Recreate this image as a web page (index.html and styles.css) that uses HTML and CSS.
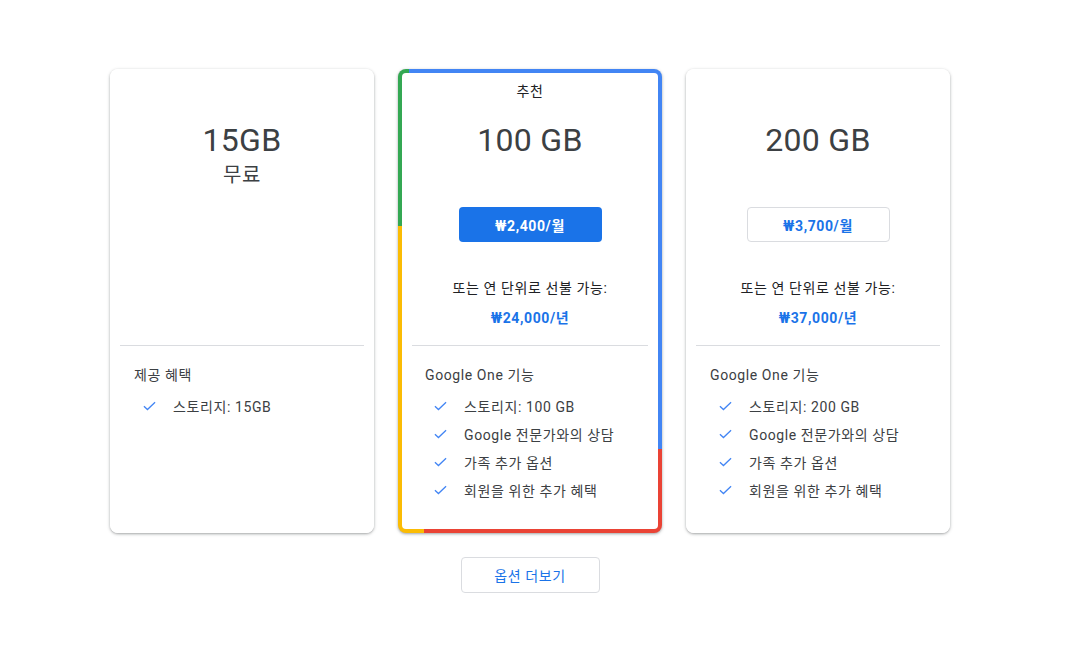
FILE: index.html
```html
<!DOCTYPE html>
<html lang="ko">
<head>
  <meta charset="UTF-8" />
  <meta name="viewport" content="width=device-width, initial-scale=1.0"/>
  <title>Google One 요금제</title>
  <link rel="stylesheet" href="styles.css">
</head>
<body>
  <main class="planos">
    <div class="planos-lista">

      <div class="plano">
        <div class="plano-corpo">
          <div class="plano-topo">
            <div class="etiqueta"></div>
            <h2 class="capacidade">15GB</h2>
            <p class="gratis">무료</p>
          </div>
          <hr class="divisor">
          <div class="recursos">
            <p class="recursos-titulo">제공 혜택</p>
            <ul>
              <li><svg viewBox="0 0 14 10"><path d="M1 5.2 L4.8 8.8 L13 1" /></svg>스토리지: 15GB</li>
            </ul>
          </div>
        </div>
      </div>

      <div class="plano plano-destaque">
        <div class="plano-corpo">
          <div class="plano-topo">
            <div class="etiqueta">추천</div>
            <h2 class="capacidade">100 GB</h2>
            <button class="btn-preco btn-cheio">₩2,400/월</button>
            <p class="anual">또는 연 단위로 선불 가능:</p>
            <p class="preco-anual">₩24,000/년</p>
          </div>
          <hr class="divisor">
          <div class="recursos">
            <p class="recursos-titulo">Google One 기능</p>
            <ul>
              <li><svg viewBox="0 0 14 10"><path d="M1 5.2 L4.8 8.8 L13 1" /></svg>스토리지: 100 GB</li>
              <li><svg viewBox="0 0 14 10"><path d="M1 5.2 L4.8 8.8 L13 1" /></svg>Google 전문가와의 상담</li>
              <li><svg viewBox="0 0 14 10"><path d="M1 5.2 L4.8 8.8 L13 1" /></svg>가족 추가 옵션</li>
              <li><svg viewBox="0 0 14 10"><path d="M1 5.2 L4.8 8.8 L13 1" /></svg>회원을 위한 추가 혜택</li>
            </ul>
          </div>
        </div>
      </div>

      <div class="plano">
        <div class="plano-corpo">
          <div class="plano-topo">
            <div class="etiqueta"></div>
            <h2 class="capacidade">200 GB</h2>
            <button class="btn-preco btn-contorno">₩3,700/월</button>
            <p class="anual">또는 연 단위로 선불 가능:</p>
            <p class="preco-anual">₩37,000/년</p>
          </div>
          <hr class="divisor">
          <div class="recursos">
            <p class="recursos-titulo">Google One 기능</p>
            <ul>
              <li><svg viewBox="0 0 14 10"><path d="M1 5.2 L4.8 8.8 L13 1" /></svg>스토리지: 200 GB</li>
              <li><svg viewBox="0 0 14 10"><path d="M1 5.2 L4.8 8.8 L13 1" /></svg>Google 전문가와의 상담</li>
              <li><svg viewBox="0 0 14 10"><path d="M1 5.2 L4.8 8.8 L13 1" /></svg>가족 추가 옵션</li>
              <li><svg viewBox="0 0 14 10"><path d="M1 5.2 L4.8 8.8 L13 1" /></svg>회원을 위한 추가 혜택</li>
            </ul>
          </div>
        </div>
      </div>

    </div>

    <button class="btn-mais">옵션 더보기</button>
  </main>
</body>
</html>
```

FILE: styles.css
```css
:root {
  --azul: #1a73e8;
  --azul-google: #4285f4;
  --verde: #34a853;
  --amarelo: #fbbc04;
  --vermelho: #ea4335;
  --texto: #3c4043;
  --borda: #dadce0;
}

* {
  margin: 0;
  padding: 0;
  box-sizing: border-box;
}

body {
  font-family: Roboto, "Noto Sans CJK KR", sans-serif;
  background-color: #fff;
  color: var(--texto);
  font-size: 14px;
  letter-spacing: 0.6px;
}

.planos {
  padding-top: 69px;
  display: flex;
  flex-direction: column;
  align-items: center;
  padding-right: 10px;
}

.planos-lista {
  display: flex;
  gap: 24px;
}

.plano {
  width: 264px;
  height: 464px;
  border-radius: 8px;
  background-color: #fff;
  box-shadow: 0 1px 2px rgba(60, 64, 67, 0.3), 0 1px 3px 1px rgba(60, 64, 67, 0.15);
  display: flex;
}

/* borda com as cores do Google */
.plano-destaque {
  padding: 4px;
  background-color: var(--vermelho);
  background-image:
    linear-gradient(var(--verde), var(--verde)),
    linear-gradient(var(--amarelo), var(--amarelo)),
    linear-gradient(var(--azul-google), var(--azul-google));
  background-size: 11px 157px, 26px 307px, 100% 380px;
  background-position: 0 0, 0 157px, 0 0;
  background-repeat: no-repeat;
}

.plano-corpo {
  flex: 1;
  background-color: #fff;
  border-radius: 8px;
  display: flex;
  flex-direction: column;
}

.plano-destaque .plano-corpo {
  border-radius: 4px;
}

.plano-topo {
  height: 276px;
  padding-top: 12px;
  text-align: center;
  display: flex;
  flex-direction: column;
  align-items: center;
}

.plano-destaque .plano-topo {
  height: 272px;
  padding-top: 8px;
}

.etiqueta {
  height: 20px;
  line-height: 20px;
  font-size: 14px;
  color: #202124;
}

.capacidade {
  margin-top: 19px;
  font-size: 32px;
  line-height: 40px;
  font-weight: 400;
  letter-spacing: 0.3px;
  color: var(--texto);
}

.gratis {
  margin-top: 1px;
  font-size: 20px;
  line-height: 28px;
}

.btn-preco {
  margin-top: 47px;
  width: 143px;
  height: 35px;
  border-radius: 4px;
  font-family: inherit;
  font-size: 14px;
  font-weight: 700;
  letter-spacing: 0.6px;
  cursor: pointer;
}

.btn-cheio {
  background-color: var(--azul);
  border: none;
  color: #fff;
}

.btn-contorno {
  background-color: #fff;
  border: 1px solid var(--borda);
  color: var(--azul);
}

.anual {
  margin-top: 36px;
  line-height: 20px;
  color: #202124;
}

.preco-anual {
  margin-top: 10px;
  line-height: 20px;
  font-weight: 700;
  color: var(--azul);
}

.divisor {
  border: none;
  border-top: 1px solid var(--borda);
  margin: 0 10px;
}

.recursos {
  padding: 19px 24px 0;
}

.plano-destaque .recursos {
  padding-left: 23px;
}

.recursos-titulo {
  line-height: 20px;
  margin-bottom: 7px;
}

.recursos ul {
  list-style: none;
}

.recursos li {
  display: flex;
  align-items: center;
  height: 28px;
  padding-left: 9px;
}

.recursos li svg {
  width: 13px;
  height: 10px;
  margin-right: 17px;
  fill: none;
  stroke: var(--azul-google);
  stroke-width: 1.4;
}

.btn-mais {
  margin-top: 24px;
  width: 139px;
  height: 36px;
  background-color: #fff;
  border: 1px solid var(--borda);
  border-radius: 4px;
  color: var(--azul);
  font-family: inherit;
  font-size: 14px;
  letter-spacing: 0.6px;
  cursor: pointer;
}
```
